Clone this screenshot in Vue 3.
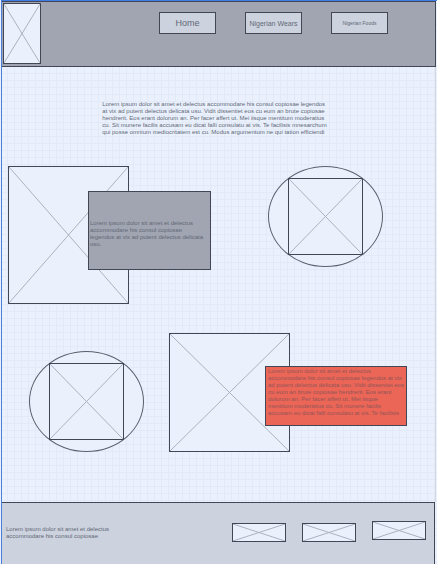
<script setup>
const links = [
  { label: 'Home', size: 'large' },
  { label: 'Nigerian Wears', size: 'medium' },
  { label: 'Nigerian Foods', size: 'small' },
]
const badges = [
  { id: 1, raised: false },
  { id: 2, raised: false },
  { id: 3, raised: true },
]
</script>

<template>
  <div class="page">
    <header class="header">
      <div class="frame logo">
        <svg class="cross" viewBox="0 0 100 100" preserveAspectRatio="none" aria-hidden="true">
          <path d="M0 0L100 100M100 0L0 100" />
        </svg>
      </div>
      <nav class="nav">
        <a v-for="link in links" :key="link.label" href="#" class="nav-link" :class="link.size">{{ link.label }}</a>
      </nav>
    </header>

    <main class="main">
      <p class="intro">
        Lorem ipsum dolor sit amet et delectus accommodare his consul copiosae legendos<br />
        at vix ad putent delectus delicata usu. Vidit dissentiet eos cu eum an brute copiosae<br />
        hendrerit. Eos erant dolorum an. Per facer affert ut. Mei iisque mentitum moderatius<br />
        cu. Sit munere facilis accusam eu dicat falli consulatu at vis. Te facilisis mnesarchum<br />
        qui posse omnium mediocritatem est cu. Modus argumentum ne qui tation efficiendi
      </p>

      <section class="row first">
        <div class="feature">
          <div class="frame picture tall">
            <svg class="cross" viewBox="0 0 100 100" preserveAspectRatio="none" aria-hidden="true">
              <path d="M0 0L100 100M100 0L0 100" />
            </svg>
          </div>
          <p class="note grey">
            Lorem ipsum dolor sit amet et delectus<br />
            accommodare his consul copiosae<br />
            legendos at vix ad putent delectus delicata<br />
            usu.
          </p>
        </div>
        <div class="oval">
          <div class="frame inset">
            <svg class="cross" viewBox="0 0 100 100" preserveAspectRatio="none" aria-hidden="true">
              <path d="M0 0L100 100M100 0L0 100" />
            </svg>
          </div>
        </div>
      </section>

      <section class="row second">
        <div class="oval">
          <div class="frame inset">
            <svg class="cross" viewBox="0 0 100 100" preserveAspectRatio="none" aria-hidden="true">
              <path d="M0 0L100 100M100 0L0 100" />
            </svg>
          </div>
        </div>
        <div class="feature">
          <div class="frame picture">
            <svg class="cross" viewBox="0 0 100 100" preserveAspectRatio="none" aria-hidden="true">
              <path d="M0 0L100 100M100 0L0 100" />
            </svg>
          </div>
          <p class="note red">
            Lorem ipsum dolor sit amet et delectus<br />
            accommodare his consul copiosae legendos at vix<br />
            ad putent delectus delicata usu. Vidit dissentiet eos<br />
            cu eum an brute copiosae hendrerit. Eos erant<br />
            dolorum an. Per facer affert ut. Mei iisque<br />
            mentitum moderatius cu. Sit munere facilis<br />
            accusam eu dicat falli consulatu at vis. Te facilisis
          </p>
        </div>
      </section>
    </main>

    <footer class="footer">
      <p class="footer-text">
        Lorem ipsum dolor sit amet et delectus<br />
        accommodare his consul copiosae
      </p>
      <div class="badges">
        <div v-for="badge in badges" :key="badge.id" class="frame badge" :class="{ raised: badge.raised }">
          <svg class="cross" viewBox="0 0 100 100" preserveAspectRatio="none" aria-hidden="true">
            <path d="M0 0L100 100M100 0L0 100" />
          </svg>
        </div>
      </div>
    </footer>
  </div>
</template>

<style>
body {
  margin: 0;
  background: #eaf0fd;
}
</style>

<style scoped>
.page {
  --ink: #414755;
  --paper: #eaf1fd;
  box-sizing: border-box;
  display: flex;
  flex-direction: column;
  min-height: 100vh;
  margin-left: 1px;
  border-top: 1px solid #3f7ce8;
  border-left: 1px solid #4a7edb;
  color: #626977;
  background-color: var(--paper);
  background-image:
    linear-gradient(to right, #e2e9f7 1px, transparent 1px),
    linear-gradient(to bottom, #e2e9f7 1px, transparent 1px);
  background-size: 7px 7px;
  background-position: 5px 2px;
  font-family: "Liberation Sans", Arial, sans-serif;
  font-size: 6px;
  line-height: 7px;
}

p {
  margin: 0;
  white-space: nowrap;
}

.frame {
  box-sizing: border-box;
  border: 1px solid var(--ink);
  background: var(--paper);
}

.cross {
  display: block;
  width: 100%;
  height: 100%;
}

.cross path {
  fill: none;
  stroke: #acb1be;
  stroke-width: 1px;
  vector-effect: non-scaling-stroke;
}

.header {
  box-sizing: border-box;
  display: flex;
  justify-content: space-between;
  align-items: flex-start;
  height: 66px;
  margin-right: 1px;
  padding: 1px 47px 0 1px;
  border: solid var(--ink);
  border-width: 1px 1px 1px 0;
  background: #a0a5b1;
}

.logo {
  width: 38px;
  height: 61px;
}

.nav {
  display: flex;
  gap: 29px;
  padding-top: 9px;
}

.nav-link {
  box-sizing: border-box;
  display: flex;
  align-items: center;
  justify-content: center;
  width: 57px;
  height: 22px;
  border: 1px solid var(--ink);
  background: #ccd2de;
  color: #626977;
  text-decoration: none;
  white-space: nowrap;
}

.large {
  font-size: 9px;
}

.medium {
  font-size: 7px;
}

.small {
  font-size: 5px;
}

.main {
  margin-right: 1px;
  border-right: 1px solid #d3d9e7;
}

.intro {
  width: max-content;
  margin: 0 auto;
  padding: 34px 8px 0 0;
}

.row {
  display: flex;
  justify-content: space-between;
}

.first {
  align-items: flex-start;
  padding: 30px 52px 0 6px;
}

.second {
  align-items: flex-end;
  padding: 29px 28px 50px 27px;
}

.feature {
  display: flex;
  align-items: flex-start;
}

.picture {
  width: 121px;
  height: 119px;
}

.tall {
  height: 138px;
}

.note {
  box-sizing: border-box;
  position: relative;
  border: 1px solid var(--ink);
}

.grey {
  width: 123px;
  height: 79px;
  margin: 25px 0 0 -41px;
  padding: 28px 0 0 1px;
  background: #a0a5b1;
}

.red {
  width: 142px;
  height: 60px;
  margin: 33px 0 0 -25px;
  padding: 1px 0 0 2px;
  background: #eb6656;
  color: #935559;
}

.oval {
  box-sizing: border-box;
  display: flex;
  align-items: center;
  justify-content: center;
  width: 115px;
  height: 101px;
  border: 1px solid #59606d;
  border-radius: 50%;
  background: var(--paper);
}

.inset {
  width: 75px;
  height: 77px;
}

.footer {
  display: flex;
  flex: 1;
  align-items: center;
  justify-content: space-between;
  margin-right: 2px;
  padding: 0 8px 2px 4px;
  border-top: 1px solid var(--ink);
  border-right: 1px solid var(--ink);
  background: #ccd2de;
}

.badges {
  display: flex;
  gap: 16px;
}

.badge {
  width: 54px;
  height: 19px;
}

.raised {
  margin-top: -2px;
}
</style>
